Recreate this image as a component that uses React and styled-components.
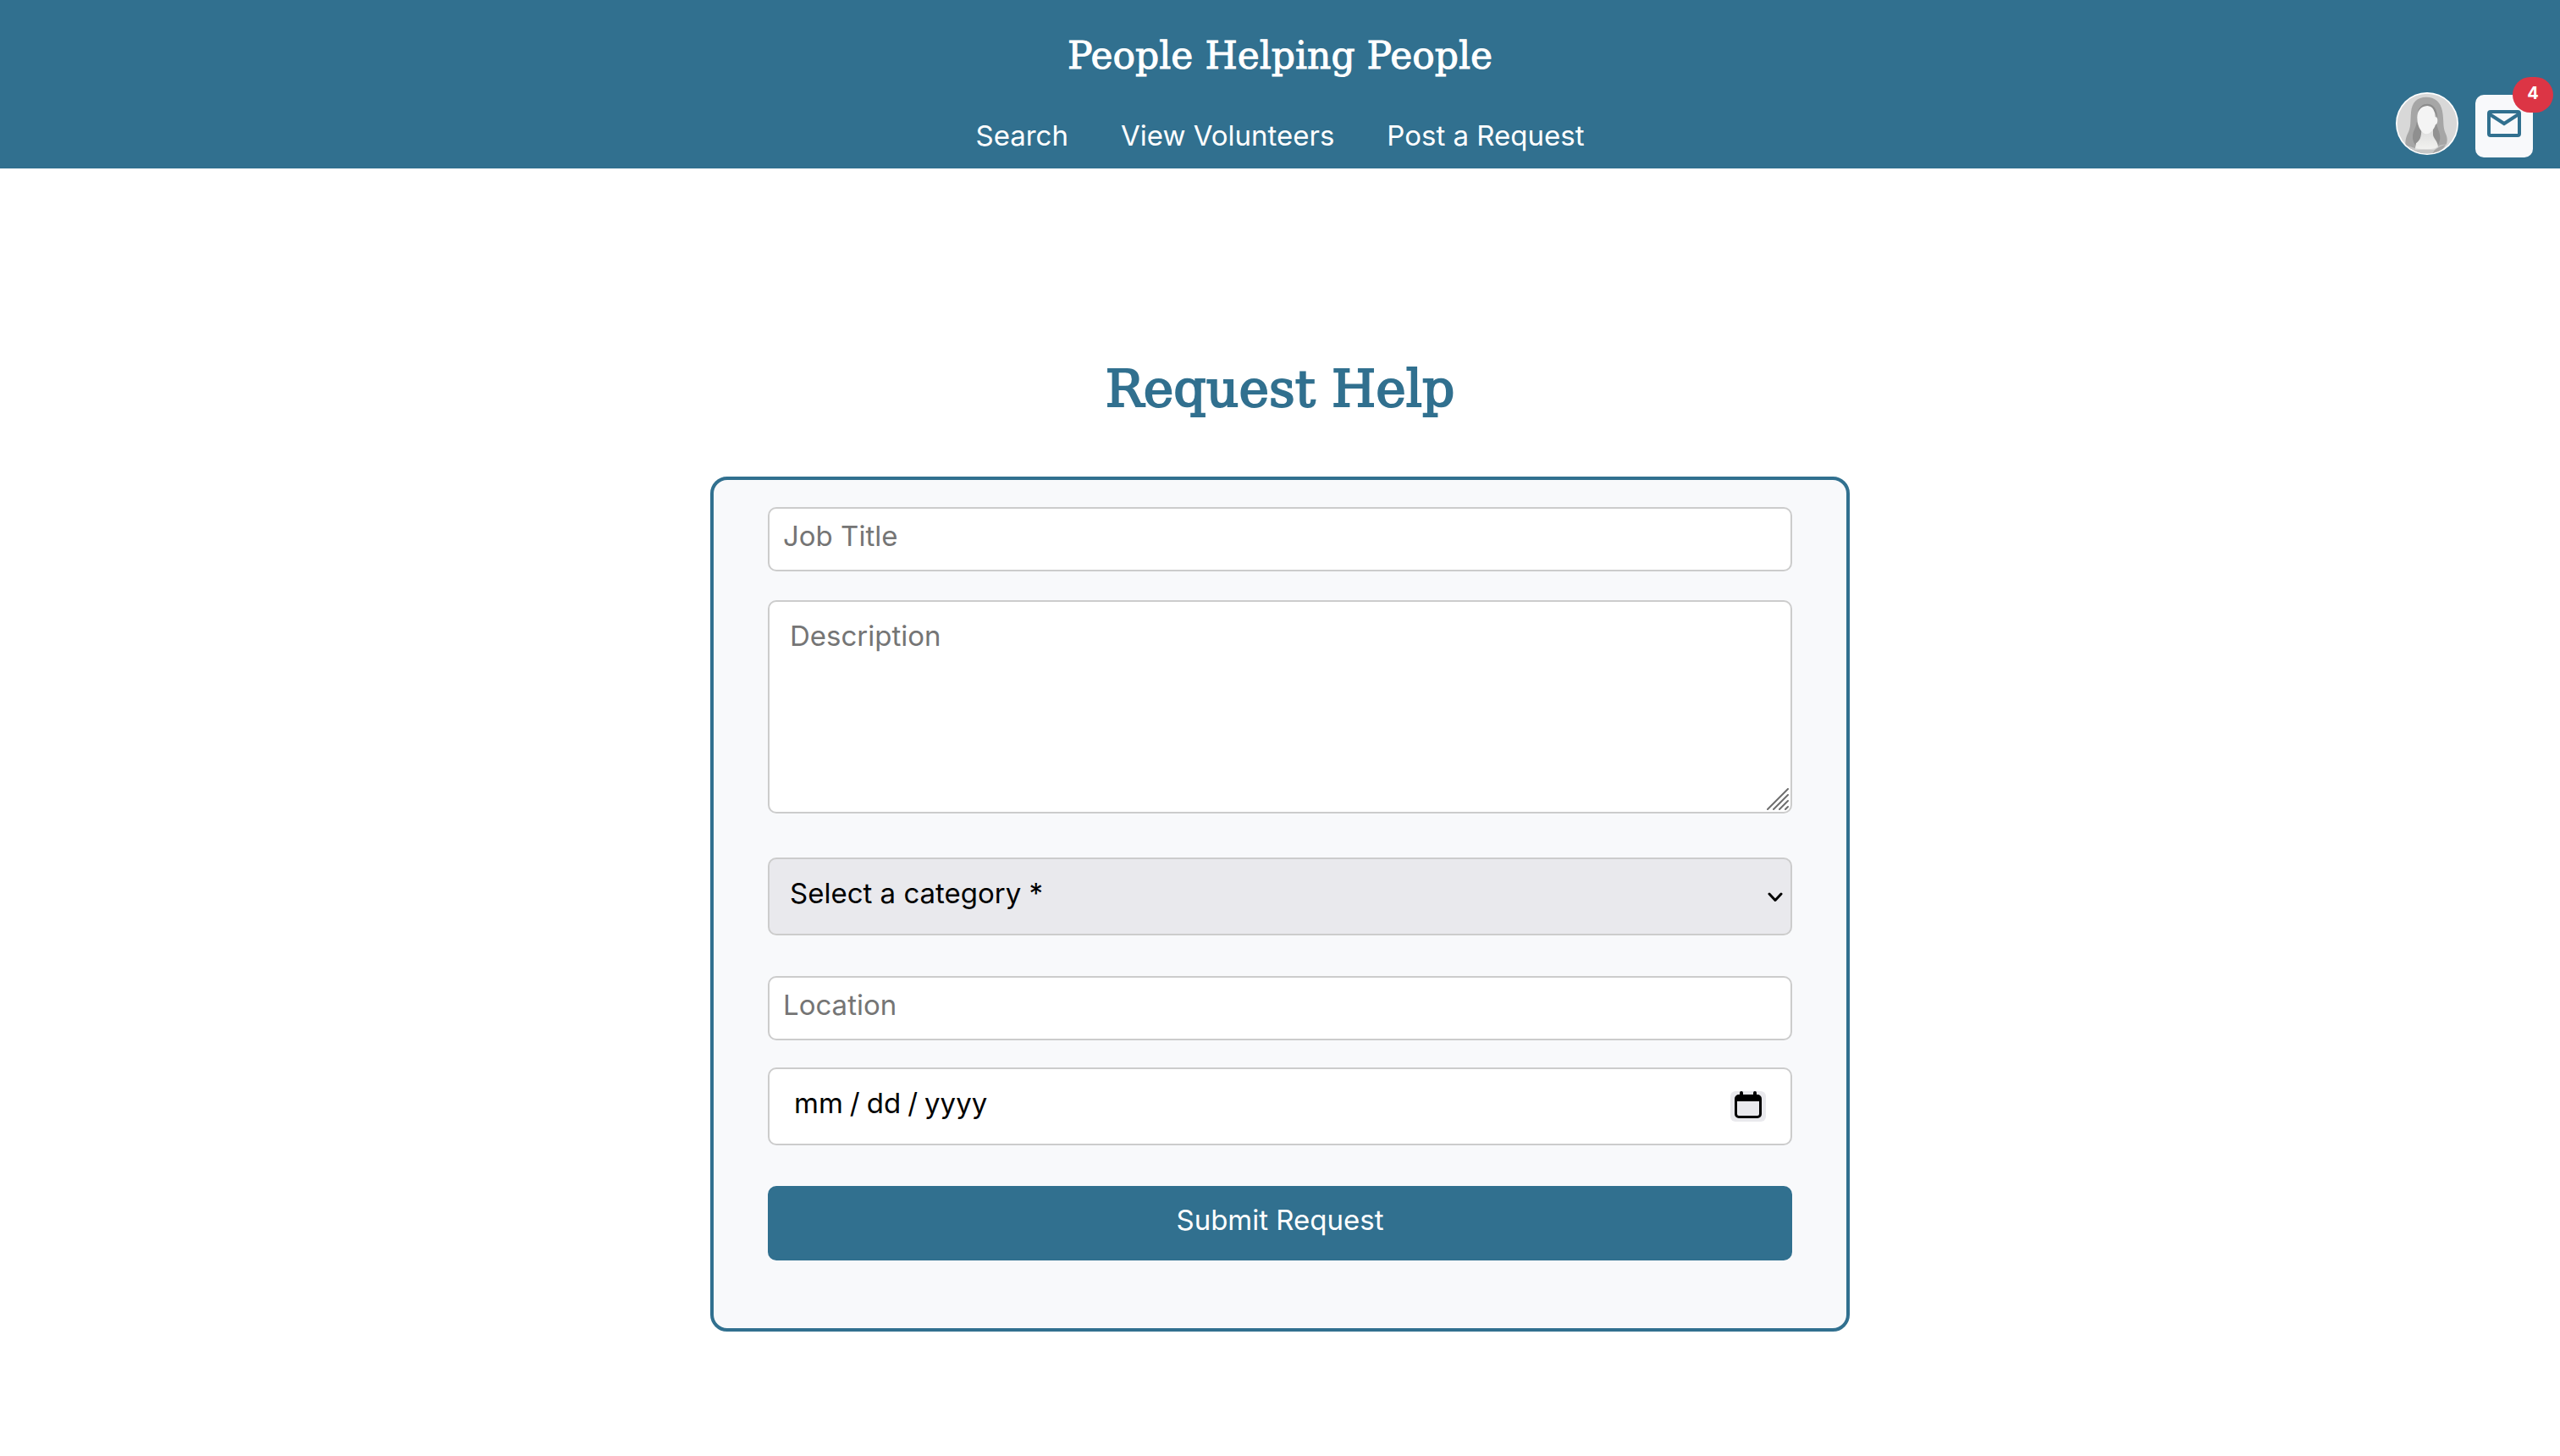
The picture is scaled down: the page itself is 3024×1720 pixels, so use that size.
import React from "react";
import styled, { createGlobalStyle, css } from "styled-components";

const brand = "#31708f";
const surface = "#f8f9fb";
const sans = `Inter, "Liberation Sans", sans-serif`;
const slab = `"DejaVu Serif", "Liberation Serif", serif`;

const GlobalStyle = createGlobalStyle`
  *, *::before, *::after { box-sizing: border-box; }
  body {
    margin: 0;
    background: #fff;
    color: #000;
    font-family: ${sans};
    font-size: 33px;
    line-height: 40px;
  }
`;

const Header = styled.header`
  display: grid;
  grid-template-columns: 1fr auto 1fr;
  padding: 40px 32px 13px;
  background: ${brand};
  color: #fff;
`;

const Masthead = styled.div`
  grid-column: 2;
  display: flex;
  flex-direction: column;
  align-items: center;
  gap: 48px;
  padding-bottom: 6px;
`;

const Brand = styled.a`
  color: inherit;
  font-family: ${slab};
  font-size: 44px;
  line-height: 52px;
  text-decoration: none;
  -webkit-text-stroke: 1px currentColor;
`;

const Nav = styled.nav`
  display: flex;
  gap: 62px;
`;

const NavLink = styled.a`
  color: inherit;
  line-height: 40px;
  text-decoration: none;
`;

const Actions = styled.div`
  display: flex;
  align-items: flex-end;
  justify-content: flex-end;
  gap: 20px;
`;

const AvatarLink = styled.a`
  display: block;
  width: 74px;
  height: 74px;
  margin-bottom: 3px;

  svg {
    display: block;
    width: 100%;
    height: 100%;
  }
`;

const InboxButton = styled.button`
  position: relative;
  display: flex;
  justify-content: center;
  width: 68px;
  height: 74px;
  padding: 18px 0 0;
  border: 0;
  border-radius: 10px;
  background: ${surface};
  color: ${brand};
  font-family: inherit;

  svg {
    display: block;
    width: 40px;
    height: 32px;
  }
`;

const Badge = styled.span`
  position: absolute;
  top: -21px;
  right: -24px;
  width: 48px;
  height: 42px;
  border-radius: 21px;
  background: #dc3545;
  color: #fff;
  font-size: 20px;
  font-weight: 700;
  line-height: 38px;
  text-align: center;
`;

const Main = styled.main`
  display: flex;
  flex-direction: column;
  align-items: center;
  padding: 224px 32px 64px;
`;

const Title = styled.h1`
  margin: 0 0 68px;
  color: ${brand};
  font-family: ${slab};
  font-size: 60px;
  font-weight: 400;
  line-height: 72px;
  -webkit-text-stroke: 2px currentColor;
`;

const Form = styled.form`
  display: flex;
  flex-direction: column;
  width: 100%;
  max-width: 1346px;
  padding: 32px 64px 80px;
  border: 4px solid ${brand};
  border-radius: 20px;
  background: ${surface};
`;

const Field = styled.div`
  position: relative;
  display: flex;
  margin-bottom: ${(p) => p.$gap}px;
`;

const control = css`
  display: block;
  width: 100%;
  margin: 0;
  border: 2px solid #ccc;
  border-radius: 10px;
  background: #fff;
  color: #000;
  font-family: inherit;
  font-size: 33px;
  line-height: 40px;
  outline: none;

  &::placeholder {
    color: #757575;
    opacity: 1;
  }
`;

const TextInput = styled.input`
  ${control}
  height: 76px;
  padding: 0 16px 8px;
`;

const TextArea = styled.textarea`
  ${control}
  height: 252px;
  padding: 20px 24px;
  resize: vertical;

  &::-webkit-resizer {
    display: none;
  }
`;

const Select = styled.select`
  ${control}
  appearance: none;
  height: 92px;
  padding: 0 24px 8px;
  background: #e9e9ed;
`;

const DateInput = styled.input`
  ${control}
  height: 92px;
  padding: 0 28px 8px;

  &::-webkit-datetime-edit-text {
    padding: 0 7px;
  }
  &::-webkit-calendar-picker-indicator {
    opacity: 0;
  }
`;

const Grip = styled.svg`
  position: absolute;
  right: 4px;
  bottom: 4px;
  width: 26px;
  height: 26px;
  pointer-events: none;
`;

const Chevron = styled.svg`
  position: absolute;
  right: 11px;
  top: 41px;
  width: 18px;
  height: 12px;
  pointer-events: none;
`;

const CalendarIcon = styled.svg`
  position: absolute;
  right: 31px;
  top: 28px;
  width: 42px;
  height: 36px;
  border-radius: 6px;
  background: #e9e9ed;
  pointer-events: none;
`;

const SubmitButton = styled.button`
  height: 88px;
  padding: 0 24px 8px;
  border: 0;
  border-radius: 10px;
  background: ${brand};
  color: #fff;
  font-family: inherit;
  font-size: 33px;
  line-height: 40px;
`;

function Avatar() {
  return (
    <svg viewBox="150 117 222 222" aria-hidden="true">
      <defs>
        <clipPath id="avatar-disc">
          <circle cx="261" cy="228" r="106" />
        </clipPath>
        <linearGradient id="avatar-neck" x1="0" y1="0" x2="0" y2="1">
          <stop offset="0" stopColor="#dcdcdc" />
          <stop offset="1" stopColor="#f2f2f0" />
        </linearGradient>
      </defs>
      <circle cx="261" cy="228" r="111" fill="#fff" />
      <g clipPath="url(#avatar-disc)">
        <rect x="150" y="117" width="222" height="222" fill="#d8d8d8" />
        <path
          d="M258 134C226 134 207 152 204 188C201 222 205 240 192 264C184 280 180 304 190 322L225 339H295L318 316C334 304 336 282 326 262C316 240 321 216 315 184C310 152 288 134 258 134Z"
          fill="#a6a6a6"
        />
        <path d="M224 222C222 246 212 250 210 272C209 290 218 302 224 312L243 268L242 250Z" fill="#8f8f8f" />
        <path d="M293 222C296 246 308 258 307 280C306 294 300 306 294 314L279 268L281 250Z" fill="#929292" />
        <path d="M228 186C234 164 254 154 272 160C290 166 298 188 298 210L290 190L262 166Z" fill="#8c8c8c" />
        <path d="M241 246H282V268C284 282 300 292 300 312L286 320H218L222 298C234 288 241 280 241 246Z" fill="url(#avatar-neck)" />
        <path
          d="M226 206C226 184 238 166 262 165C282 166 289 184 290 205C300 202 301 228 291 232C285 250 272 265 259 265C244 265 226 242 226 206Z"
          fill="#f4f4f4"
        />
        <path d="M160 318C190 298 200 312 222 316C250 320 270 320 292 314C304 302 330 298 350 304V339H160Z" fill="#d4d4d4" opacity="0.7" />
        <path d="M190 322C202 326 214 320 226 334L236 339H196ZM288 322C300 312 312 306 326 302C322 314 312 324 298 330L280 334Z" fill="#a6a6a6" />
      </g>
    </svg>
  );
}

export default function App() {
  return (
    <>
      <GlobalStyle />
      <Header>
        <Masthead>
          <Brand href="#home">People Helping People</Brand>
          <Nav>
            <NavLink href="#search">Search</NavLink>
            <NavLink href="#volunteers">View Volunteers</NavLink>
            <NavLink href="#request">Post a Request</NavLink>
          </Nav>
        </Masthead>
        <Actions>
          <AvatarLink href="#profile" aria-label="Profile">
            <Avatar />
          </AvatarLink>
          <InboxButton type="button" aria-label="Messages">
            <svg viewBox="0 0 40 32" fill="none" stroke="currentColor" strokeWidth="4" aria-hidden="true">
              <rect x="2" y="2" width="36" height="28" rx="2" />
              <path d="M3 5L20 16L37 5" />
            </svg>
            <Badge>4</Badge>
          </InboxButton>
        </Actions>
      </Header>
      <Main>
        <Title>Request Help</Title>
        <Form>
          <Field $gap={34}>
            <TextInput type="text" placeholder="Job Title" aria-label="Job Title" />
          </Field>
          <Field $gap={52}>
            <TextArea placeholder="Description" aria-label="Description" />
            <Grip viewBox="0 0 26 26" stroke="#6e6e6e" strokeWidth="2" strokeLinecap="round" aria-hidden="true">
              <path d="M1 25L25 1M8 25L25 8M15 25L25 15M22 25L25 22" />
            </Grip>
          </Field>
          <Field $gap={48}>
            <Select aria-label="Category" defaultValue="">
              <option value="">Select a category *</option>
            </Select>
            <Chevron viewBox="0 0 18 12" fill="none" stroke="#000" strokeWidth="3" strokeLinecap="round" strokeLinejoin="round" aria-hidden="true">
              <path d="M2 2L9 9.5L16 2" />
            </Chevron>
          </Field>
          <Field $gap={32}>
            <TextInput type="text" placeholder="Location" aria-label="Location" />
          </Field>
          <Field $gap={48}>
            <DateInput type="date" aria-label="Date" />
            <CalendarIcon viewBox="0 0 42 36" aria-hidden="true">
              <path d="M13 2V7M29 2V7" stroke="#000" strokeWidth="4" strokeLinecap="round" />
              <rect x="6.5" y="5.5" width="29" height="25" rx="3.5" fill="none" stroke="#000" strokeWidth="3" />
              <path d="M6 6H36V12H6Z" fill="#000" />
            </CalendarIcon>
          </Field>
          <SubmitButton type="submit">Submit Request</SubmitButton>
        </Form>
      </Main>
    </>
  );
}
